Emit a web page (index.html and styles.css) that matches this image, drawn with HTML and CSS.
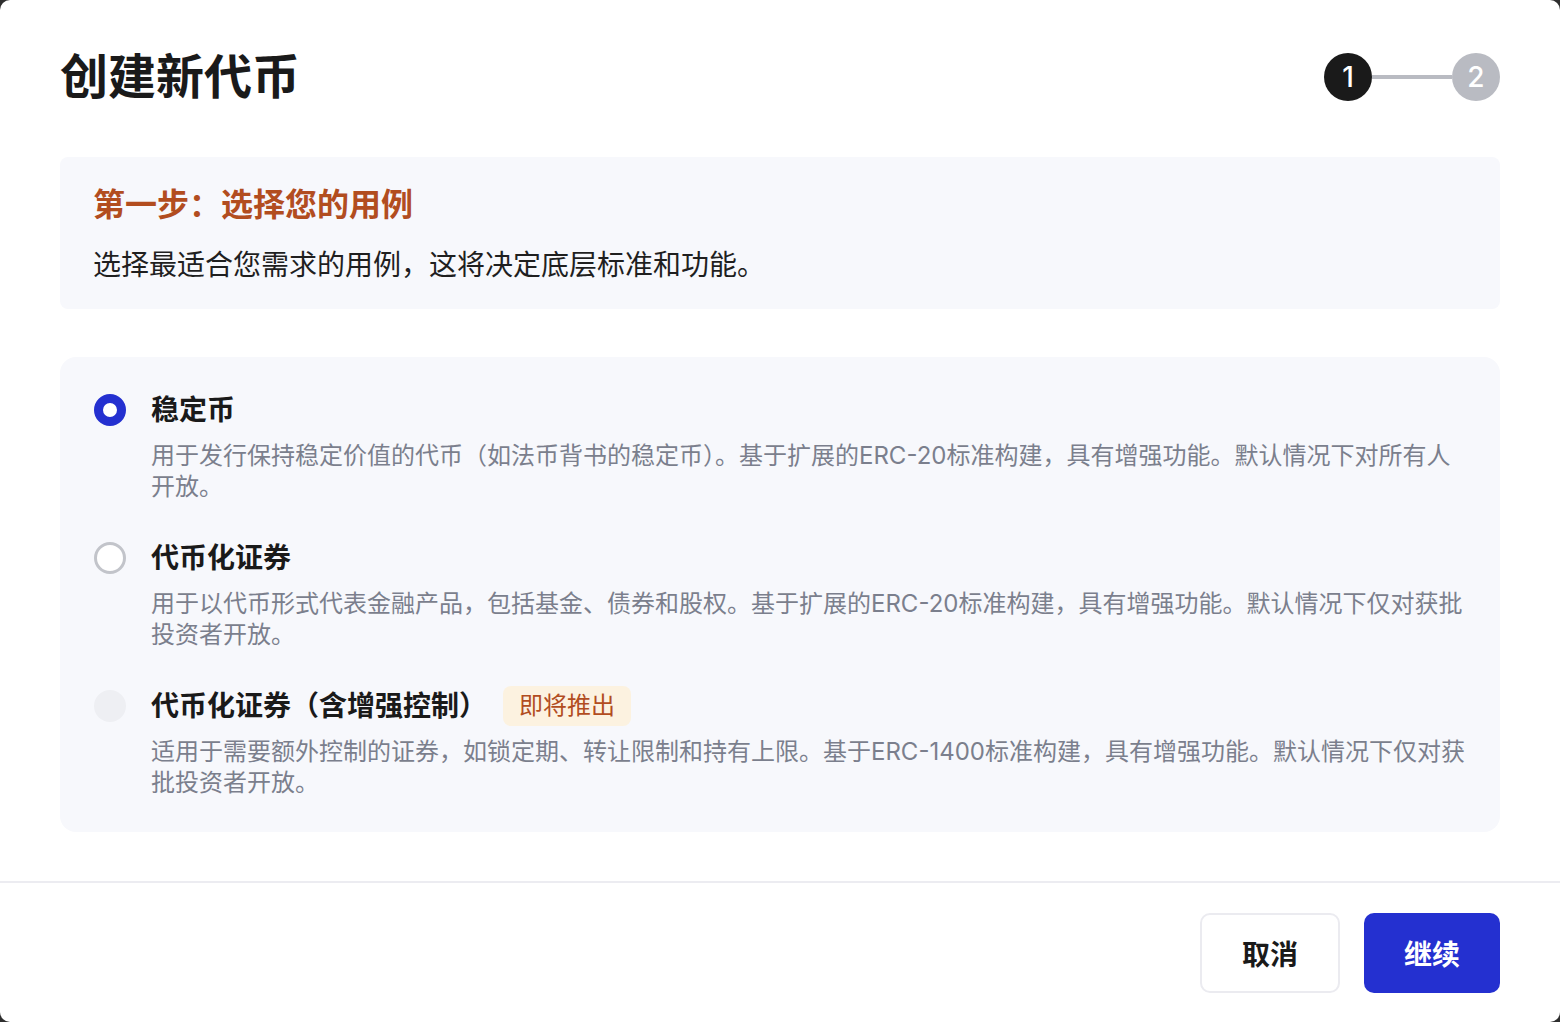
FILE: index.html
```html
<!DOCTYPE html>
<html lang="zh-CN">
<head>
<meta charset="utf-8">
<title>创建新代币</title>
<link rel="stylesheet" href="styles.css">
</head>
<body>
<div class="modal">
  <header class="header">
    <h1 class="title">创建新代币</h1>
    <div class="stepper">
      <span class="step step-active">1</span>
      <span class="step-line"></span>
      <span class="step step-idle">2</span>
    </div>
  </header>
  <main class="main">
    <section class="info">
      <h2 class="info-title">第一步：选择您的用例</h2>
      <p class="info-text">选择最适合您需求的用例，这将决定底层标准和功能。</p>
    </section>
    <section class="options">
      <div class="option">
        <span class="radio radio-checked"></span>
        <div class="option-head"><span class="option-title">稳定币</span></div>
        <p class="option-desc">用于发行保持稳定价值的代币（如法币背书的稳定币）。基于扩展的ERC-20标准构建，具有增强功能。默认情况下对所有人开放。</p>
      </div>
      <div class="option">
        <span class="radio"></span>
        <div class="option-head"><span class="option-title">代币化证券</span></div>
        <p class="option-desc">用于以代币形式代表金融产品，包括基金、债券和股权。基于扩展的ERC-20标准构建，具有增强功能。默认情况下仅对获批投资者开放。</p>
      </div>
      <div class="option">
        <span class="radio radio-disabled"></span>
        <div class="option-head"><span class="option-title">代币化证券（含增强控制）</span><span class="badge">即将推出</span></div>
        <p class="option-desc">适用于需要额外控制的证券，如锁定期、转让限制和持有上限。基于ERC-1400标准构建，具有增强功能。默认情况下仅对获批投资者开放。</p>
      </div>
    </section>
  </main>
  <footer class="footer">
    <button class="btn btn-cancel">取消</button>
    <button class="btn btn-primary">继续</button>
  </footer>
</div>
</body>
</html>
```
FILE: styles.css
```css
* { box-sizing: border-box; }
html, body { margin: 0; padding: 0; }
body {
  background: #2e2e2e;
  font-family: Inter, "Noto Sans CJK SC", sans-serif;
  color: #1a1a1a;
}
.modal {
  width: 1560px;
  height: 1022px;
  background: #ffffff;
  border-radius: 10px;
  display: flex;
  flex-direction: column;
  overflow: hidden;
}
.header {
  display: flex;
  justify-content: space-between;
  align-items: center;
  padding: 48px 60px 0 60px;
}
.title {
  margin: 0;
  font-size: 48px;
  line-height: 58px;
  font-weight: 700;
  color: #1a1a1a;
}
.stepper {
  display: flex;
  align-items: center;
}
.step {
  width: 48px;
  height: 48px;
  border-radius: 50%;
  display: flex;
  align-items: center;
  justify-content: center;
  color: #ffffff;
  font-size: 28px;
  font-weight: 500;
  font-family: Inter, sans-serif;
}
.step-active { background: #1a1a1a; }
.step-idle { background: #b9bbc2; }
.step-line {
  width: 80px;
  height: 4px;
  background: #b9bbc2;
}
.main {
  flex: 1;
  padding: 0 60px;
}
.info {
  margin-top: 51px;
  background: #f7f8fc;
  border-radius: 8px;
  padding: 26px 33px 24px 33px;
}
.info-title {
  margin: 0;
  font-size: 32px;
  line-height: 44px;
  font-weight: 700;
  color: #b24d1f;
}
.info-text {
  margin: 18px 0 0 0;
  font-size: 28px;
  line-height: 40px;
  color: #1f1f1f;
}
.options {
  margin-top: 48px;
  background: #f7f8fc;
  border-radius: 16px;
  padding: 33px 33px 34px 34px;
  display: flex;
  flex-direction: column;
  gap: 36px;
}
.option {
  display: grid;
  grid-template-columns: 32px 1fr;
  column-gap: 25px;
}
.radio {
  grid-column: 1;
  grid-row: 1;
  align-self: center;
  width: 32px;
  height: 32px;
  border-radius: 50%;
  background: #ffffff;
  border: 3px solid #c2c4ca;
}
.radio-checked {
  border: 9px solid #2430d0;
}
.radio-disabled {
  background: #eeeff3;
  border: none;
}
.option-head {
  grid-column: 2;
  grid-row: 1;
  height: 40px;
  display: flex;
  align-items: center;
}
.option-title {
  font-size: 28px;
  line-height: 40px;
  font-weight: 700;
  color: #1a1a1a;
}
.badge {
  margin-left: 16px;
  height: 40px;
  padding: 0 16px;
  border-radius: 8px;
  background: #fcf2e0;
  color: #b24d1f;
  font-size: 24px;
  line-height: 40px;
}
.option-desc {
  grid-column: 2;
  grid-row: 2;
  margin: 10px 0 0 0;
  font-size: 24px;
  line-height: 31px;
  color: #7b7f8d;
}
.footer {
  border-top: 2px solid #ececf1;
  padding: 30px 60px 29px 60px;
  display: flex;
  justify-content: flex-end;
  gap: 24px;
}
.btn {
  height: 80px;
  padding: 0 40px;
  border-radius: 10px;
  font-family: Inter, "Noto Sans CJK SC", sans-serif;
  font-size: 28px;
  font-weight: 700;
  cursor: pointer;
}
.btn-cancel {
  background: #ffffff;
  border: 2px solid #ebebf0;
  color: #1a1a1a;
}
.btn-primary {
  background: #2430d0;
  border: none;
  color: #ffffff;
}
```
